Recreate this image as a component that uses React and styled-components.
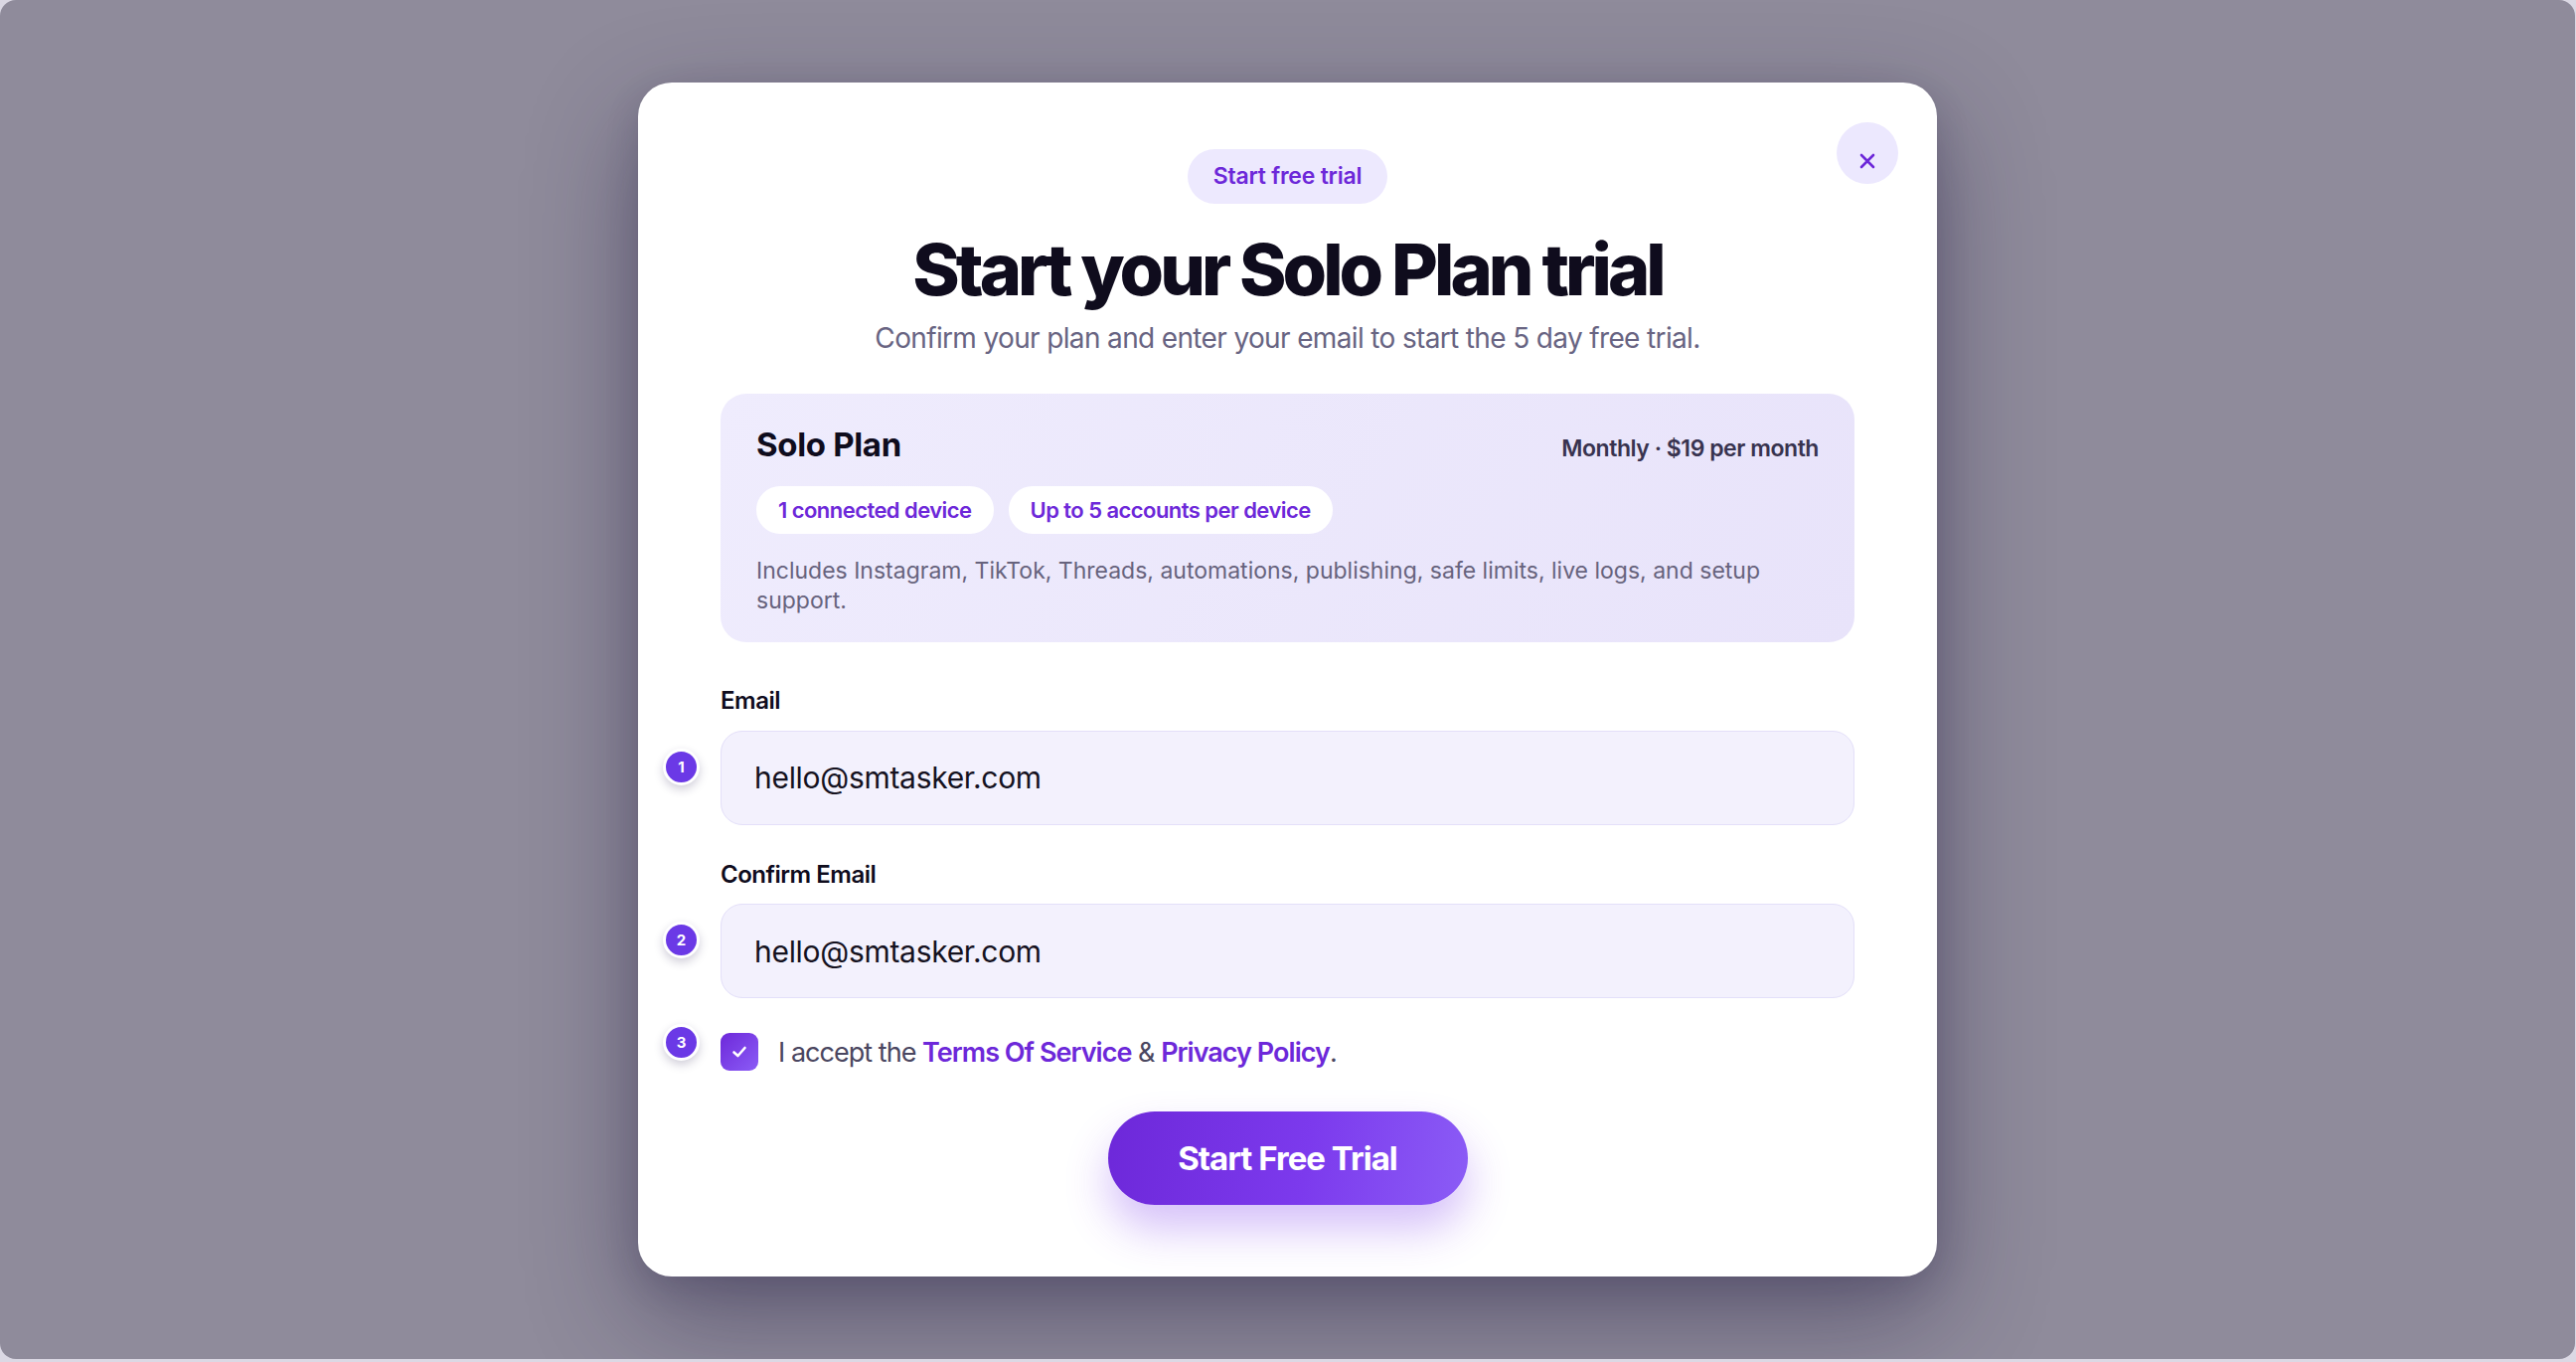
import React from "react";
import styled, { createGlobalStyle } from "styled-components";

const GlobalStyle = createGlobalStyle`
  html, body {
    margin: 0;
    padding: 0;
    background: #dbd8e4;
  }
  body {
    font-family: Inter, "Noto Sans", sans-serif;
    -webkit-font-smoothing: antialiased;
  }
  * { box-sizing: border-box; }
`;

const Backdrop = styled.div`
  width: 2591px;
  height: 1367px;
  border-radius: 16px;
  background: #8f8b9b;
  display: flex;
  align-items: center;
  justify-content: center;
`;

const Modal = styled.div`
  position: relative;
  width: 1307px;
  background: #ffffff;
  border-radius: 34px;
  padding: 67px 83px 72px;
  display: flex;
  flex-direction: column;
  align-items: center;
  box-shadow: 0 40px 110px rgba(34, 26, 64, 0.45), 0 12px 34px rgba(34, 26, 64, 0.16);
`;

const CloseButton = styled.button`
  position: absolute;
  top: 40px;
  right: 39px;
  width: 62px;
  height: 62px;
  border: none;
  border-radius: 50%;
  background: #ece8fe;
  color: #6d28d9;
  display: flex;
  align-items: center;
  justify-content: center;
  padding: 16px 0 0;
  cursor: pointer;
`;

const Pill = styled.span`
  display: inline-flex;
  align-items: center;
  height: 55px;
  padding: 0 26px;
  border-radius: 999px;
  background: #ede9fe;
  color: #6d28d9;
  font-size: 23px;
  font-weight: 600;
  letter-spacing: -0.01em;
`;

const Title = styled.h1`
  margin: 26px 0 0;
  font-size: 72px;
  line-height: 1.1;
  font-weight: 800;
  letter-spacing: -0.055em;
  color: #0f0c1d;
  text-align: center;
`;

const Subtitle = styled.p`
  margin: 12px 0 0;
  font-size: 28px;
  line-height: 1.35;
  font-weight: 400;
  letter-spacing: -0.023em;
  color: #686482;
  text-align: center;
`;

const PlanCard = styled.section`
  align-self: stretch;
  margin-top: 36px;
  padding: 32px 36px 27px;
  border-radius: 26px;
  background: linear-gradient(120deg, #efecfd 0%, #e8e3fa 100%);
`;

const PlanHeader = styled.div`
  display: flex;
  justify-content: space-between;
  align-items: baseline;
`;

const PlanName = styled.h2`
  margin: 0;
  font-size: 33px;
  line-height: 1.2;
  font-weight: 700;
  letter-spacing: -0.01em;
  color: #0f0c1d;
`;

const PlanPrice = styled.span`
  font-size: 23px;
  font-weight: 600;
  letter-spacing: -0.02em;
  color: #38334f;
`;

const ChipRow = styled.div`
  display: flex;
  gap: 15px;
  margin-top: 22px;
`;

const Chip = styled.span`
  display: inline-flex;
  align-items: center;
  height: 48px;
  padding: 0 22px;
  border-radius: 999px;
  background: #ffffff;
  color: #6d28d9;
  font-size: 22px;
  font-weight: 600;
  letter-spacing: -0.025em;
`;

const PlanNote = styled.p`
  margin: 22px 0 0;
  font-size: 23px;
  line-height: 30px;
  letter-spacing: 0;
  color: #67637d;
`;

const Field = styled.div`
  align-self: stretch;
  margin-top: ${(p) => p.$gap}px;
  display: flex;
  flex-direction: column;
  gap: 15px;
`;

const Label = styled.label`
  font-size: 24px;
  line-height: 28.6px;
  font-weight: 600;
  letter-spacing: -0.02em;
  color: #0f0c1d;
`;

const InputWrap = styled.div`
  position: relative;
`;

const StepBadge = styled.span`
  position: absolute;
  left: -58px;
  top: ${(p) => p.$top}px;
  width: 37px;
  height: 37px;
  border-radius: 50%;
  border: 3px solid #ffffff;
  background: #6b39e6;
  color: #ffffff;
  font-size: 15px;
  font-weight: 700;
  display: flex;
  align-items: center;
  justify-content: center;
  box-shadow: 0 4px 10px rgba(40, 30, 80, 0.22);
`;

const TextInput = styled.input`
  width: 100%;
  height: 95px;
  padding: 0 33px;
  border: 1.5px solid #e3dff9;
  border-radius: 22px;
  background: #f3f1fd;
  font-family: inherit;
  font-size: 30px;
  letter-spacing: -0.01em;
  color: #15121f;
  outline: none;
`;

const AgreeRow = styled.div`
  position: relative;
  align-self: stretch;
  margin-top: 35px;
  display: flex;
  align-items: center;
  gap: 20px;
`;

const CheckBox = styled.span`
  width: 38px;
  height: 38px;
  border-radius: 9px;
  background: linear-gradient(135deg, #6d28d9 0%, #8b5cf6 100%);
  display: flex;
  align-items: center;
  justify-content: center;
  flex-shrink: 0;
`;

const AgreeText = styled.span`
  font-size: 27px;
  letter-spacing: -0.036em;
  color: #4a4660;
`;

const Link = styled.a`
  color: #6d28d9;
  font-weight: 600;
  text-decoration: none;
`;

const SubmitButton = styled.button`
  margin-top: 41px;
  width: 362px;
  height: 94px;
  border: none;
  border-radius: 999px;
  background: linear-gradient(100deg, #6d28d9 0%, #7c3aed 55%, #8b5cf6 100%);
  color: #ffffff;
  font-family: inherit;
  font-size: 33px;
  font-weight: 700;
  letter-spacing: -0.03em;
  box-shadow: 0 24px 44px rgba(124, 58, 237, 0.32);
  cursor: pointer;
`;

const CloseIcon = () => (
  <svg width="16" height="16" viewBox="0 0 16 16" fill="none">
    <path d="M2 2L14 14M14 2L2 14" stroke="currentColor" strokeWidth="2.6" strokeLinecap="round" />
  </svg>
);

const CheckIcon = () => (
  <svg width="18" height="18" viewBox="0 0 18 18" fill="none">
    <path d="M3.5 9.5L7.5 13L14.5 5" stroke="#fff" strokeWidth="2.6" strokeLinecap="round" strokeLinejoin="round" />
  </svg>
);

export default function App() {
  return (
    <>
      <GlobalStyle />
      <Backdrop>
        <Modal role="dialog" aria-labelledby="trial-title">
          <CloseButton aria-label="Close">
            <CloseIcon />
          </CloseButton>

          <Pill>Start free trial</Pill>
          <Title id="trial-title">Start your Solo Plan trial</Title>
          <Subtitle>Confirm your plan and enter your email to start the 5 day free trial.</Subtitle>

          <PlanCard>
            <PlanHeader>
              <PlanName>Solo Plan</PlanName>
              <PlanPrice>Monthly · $19 per month</PlanPrice>
            </PlanHeader>
            <ChipRow>
              <Chip>1 connected device</Chip>
              <Chip>Up to 5 accounts per device</Chip>
            </ChipRow>
            <PlanNote>
              Includes Instagram, TikTok, Threads, automations, publishing, safe limits, live logs, and setup support.
            </PlanNote>
          </PlanCard>

          <Field $gap={45}>
            <Label htmlFor="email">Email</Label>
            <InputWrap>
              <StepBadge $top={18}>1</StepBadge>
              <TextInput id="email" type="email" defaultValue="hello@smtasker.com" />
            </InputWrap>
          </Field>

          <Field $gap={36}>
            <Label htmlFor="confirm-email">Confirm Email</Label>
            <InputWrap>
              <StepBadge $top={18}>2</StepBadge>
              <TextInput id="confirm-email" type="email" defaultValue="hello@smtasker.com" />
            </InputWrap>
          </Field>

          <AgreeRow>
            <StepBadge $top={-9}>3</StepBadge>
            <CheckBox role="checkbox" aria-checked="true">
              <CheckIcon />
            </CheckBox>
            <AgreeText>
              I accept the <Link href="#terms">Terms Of Service</Link> &amp; <Link href="#privacy">Privacy Policy</Link>.
            </AgreeText>
          </AgreeRow>

          <SubmitButton type="button">Start Free Trial</SubmitButton>
        </Modal>
      </Backdrop>
    </>
  );
}
